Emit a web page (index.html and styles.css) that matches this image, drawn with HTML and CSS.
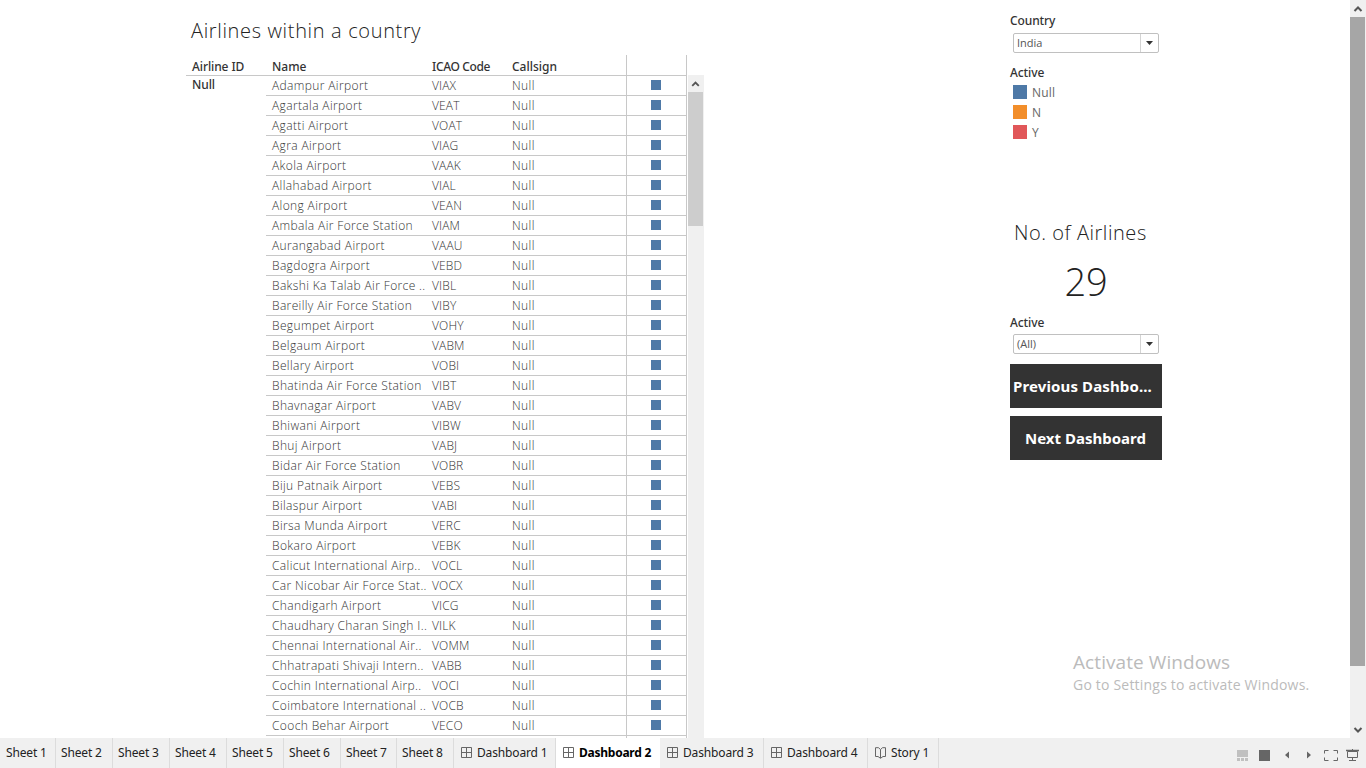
FILE: index.html
```html
<!DOCTYPE html>
<html lang="en">
<head>
<meta charset="utf-8">
<title>Airlines within a country</title>
<link rel="stylesheet" href="styles.css">
</head>
<body>
<div class="app">
  <div class="viewport">
    <main class="dashboard">
      <section class="sheet">
        <h1 class="title">Airlines within a country</h1>
        <div class="table-area">
          <div class="table">
            <div class="head">
              <div class="h-id">Airline ID</div><div class="h-name">Name</div><div class="h-icao">ICAO Code</div><div class="h-call">Callsign</div><div class="h-mark"></div>
            </div>
            <div class="table-body">
              <div class="group">Null</div>
              <div class="rows" id="rows"></div>
            </div>
          </div>
          <div class="scroll inner">
            <svg class="chev" viewBox="0 0 16 17"><path d="M4.500 11 8 7.500l3.500 3.500"/></svg>
            <div class="thumb"></div>
          </div>
        </div>
      </section>
      <aside class="side">
        <div class="label country">Country</div>
        <div class="select"><span>India</span><i><svg viewBox="0 0 7 4"><path d="M0 0h7L3.5 4z"/></svg></i></div>
        <div class="label active-legend">Active</div>
        <ul class="legend">
          <li><b class="null"></b><span>Null</span></li>
          <li><b class="no"></b><span>N</span></li>
          <li><b class="yes"></b><span>Y</span></li>
        </ul>
        <h2 class="count-title">No. of Airlines</h2>
        <div class="count">29</div>
        <div class="label active-filter">Active</div>
        <div class="select all"><span>(All)</span><i><svg viewBox="0 0 7 4"><path d="M0 0h7L3.5 4z"/></svg></i></div>
        <div class="nav prev"><span>Previous Dashbo...</span></div>
        <div class="nav next"><span>Next Dashboard</span></div>
      </aside>
      <div class="watermark"><div class="w1">Activate Windows</div><div class="w2">Go to Settings to activate Windows.</div></div>
    </main>
    <div class="scroll outer">
      <svg class="chev" viewBox="0 0 16 17"><path d="M4.500 11 8 7.500l3.500 3.500"/></svg>
      <div class="thumb"></div>
      <svg class="chev down" viewBox="0 0 16 17"><path d="M4.500 7 8 10.500 11.500 7"/></svg>
    </div>
  </div>
  <footer class="tabs">
    <div class="tab s1">Sheet 1</div><div class="tab">Sheet 2</div><div class="tab">Sheet 3</div><div class="tab">Sheet 4</div><div class="tab">Sheet 5</div><div class="tab">Sheet 6</div><div class="tab s7">Sheet 7</div><div class="tab">Sheet 8</div>
    <div class="tab dash d1"><svg class="grid" viewBox="0 0 11 11"><path d="M.5 .5h10v10H.5zM5.500 .5v10M.5 5.500h10"/></svg><span>Dashboard 1</span></div>
    <div class="tab dash current"><svg class="grid" viewBox="0 0 11 11"><path d="M.5 .5h10v10H.5zM5.500 .5v10M.5 5.500h10"/></svg><span>Dashboard 2</span></div>
    <div class="tab dash"><svg class="grid" viewBox="0 0 11 11"><path d="M.5 .5h10v10H.5zM5.500 .5v10M.5 5.500h10"/></svg><span>Dashboard 3</span></div>
    <div class="tab dash"><svg class="grid" viewBox="0 0 11 11"><path d="M.5 .5h10v10H.5zM5.500 .5v10M.5 5.500h10"/></svg><span>Dashboard 4</span></div>
    <div class="tab story"><svg class="book" viewBox="0 0 11 12"><path d="M.5 .7 3.500 .7 5.500 2.500 7.500 .7 10.500 .7V9.500H8L5.500 11.300 3 9.500H.5zM5.500 2.500v8.500"/></svg><span>Story 1</span></div>
    <svg class="tools" viewBox="0 0 130 30">
      <g fill="#c0c0c0"><path d="M1 12h11v7H1zM1 20h3v3H1zM5 20h3v3H5zM9 20h3v3H9z"/></g>
      <path fill="#666" d="M23 12h11v11H23zM53 13.500v7L49 17zM71 13.500v7L75 17z"/>
      <g fill="none" stroke="#666"><path d="M92.500 12.500h-4v3M97.500 12.500h4v3M88.500 19.500v3h4M101.500 19.500v3h-4"/><path d="M111.500 13.500h10v6h-10zM116.500 11v2M116.500 19.500v3M113 22.500h7"/><path d="M110 12.500h13" stroke-width="1.500"/></g>
    </svg>
  </footer>
</div>
<script src="table.js"></script>
</body>
</html>
```
FILE: styles.css
```css
* { box-sizing: border-box; }
body { margin: 0; overflow: hidden; background: #fff; font-family: "Noto Sans", "Open Sans", sans-serif; font-size: 12px; color: #333; }
.app { display: flex; flex-direction: column; width: 1366px; height: 768px; }
.viewport { display: flex; height: 738px; }
.dashboard { position: relative; display: flex; width: 1350px; overflow: hidden; }
.sheet { width: 518px; margin-left: 186px; }
.title, .count-title { margin: 0; font-family: "Open Sans", sans-serif; font-weight: 300; font-size: 20px; white-space: nowrap; color: #222; }
.title { height: 55px; padding: 17px 0 0 5px; line-height: 28px; letter-spacing: .65px; }
.table-area { display: flex; height: 683px; }
.table { width: 502px; overflow: hidden; }
.head { display: flex; width: 501px; height: 21px; border-bottom: 1px solid #c8c8c8; font-weight: 500; line-height: 23px; }
.head > div { padding-left: 6px; white-space: nowrap; }
.h-id, .h-icao { width: 80px; }
.h-id { letter-spacing: -.1px; }
.h-icao { letter-spacing: -.35px; }
.h-name { width: 160px; }
.h-call { width: 120px; }
.h-mark { width: 61px; border: solid #c8c8c8; border-width: 0 1px; }
.table-body { display: flex; }
.group { width: 80px; padding-left: 6px; font-weight: 500; line-height: 17px; letter-spacing: -.1px; }
.row { display: flex; width: 421px; height: 20px; border-bottom: 1px solid #c8c8c8; font-family: "Open Sans", sans-serif; font-weight: 300; line-height: 20px; white-space: nowrap; color: #333; }
.row > div { padding-left: 6px; }
.c-name { width: 160px; letter-spacing: .37px; }
.c-icao { width: 80px; letter-spacing: .15px; }
.c-call { width: 120px; letter-spacing: .4px; }
.c-mark { width: 61px; border: solid #c8c8c8; border-width: 0 1px; }
.row .c-mark { padding: 4px 0 0 24px; }
.c-mark i { display: block; width: 10px; height: 10px; background: #4e79a7; }
.scroll { display: flex; flex-direction: column; width: 16px; background: #f0f0f0; }
.inner { height: 663px; margin-top: 20px; }
.chev { display: block; width: 16px; height: 17px; flex: none; fill: none; stroke: #555; stroke-width: 2; }
.inner .chev { width: 15px; }
.inner .thumb { width: 15px; height: 134px; background: #cdcdcd; }
.outer .thumb { width: 15px; height: 649px; background: #a6a6a6; }
.down { margin-top: auto; }
.side { width: 152px; margin-left: 306px; }
.label { font-weight: 500; line-height: 16px; height: 16px; letter-spacing: -.1px; }
.country { margin-top: 13px; }
.select { display: flex; width: 146px; height: 20px; margin: 4px 0 0 3px; border: 1px solid #c0c0c0; border-radius: 2px; font-family: "Open Sans", sans-serif; font-size: 11px; font-weight: 400; line-height: 17px; color: #555; }
.select span { width: 126px; padding-left: 3px; }
.select i { display: flex; align-items: center; justify-content: center; flex: 1; border-left: 1px solid #d4d4d4; }
.select svg { width: 7px; height: 4px; fill: #333; }
.active-legend { margin-top: 12px; }
.legend { margin: 3px 0 0 3px; padding: 0; list-style: none; }
.legend li { display: flex; align-items: center; gap: 5px; height: 20px; color: #666; letter-spacing: .2px; font-family: "Open Sans", sans-serif; line-height: 18px; }
.legend b { width: 14px; height: 14px; margin-bottom: 4px; }
.legend span { margin-bottom: 2px; }
.null { background: #4e79a7; }
.no { background: #f28e2b; }
.yes { background: #e15759; }
.count-title { margin: 75px 0 0 4px; line-height: 28px; letter-spacing: .55px; }
.count { height: 50px; margin-top: 9px; text-align: center; font-family: "Open Sans", sans-serif; font-size: 38px; font-weight: 300; line-height: 50px; letter-spacing: -.3px; color: #222; }
.active-filter { margin-top: 9px; }
.all { margin-top: 3px; }
.nav { display: flex; align-items: center; height: 44px; background: #333; color: #fff; font-size: 15px; font-weight: 700; white-space: nowrap; }
.prev { margin-top: 10px; padding-left: 3px; letter-spacing: .12px; }
.next { margin-top: 8px; padding-left: 15px; }
.watermark { position: absolute; left: 1073px; top: 649px; font-family: "Open Sans", sans-serif; color: #bbb; white-space: nowrap; }
.w1 { font-size: 19px; line-height: 26px; letter-spacing: .08px; }
.w2 { font-size: 14px; line-height: 20px; letter-spacing: .2px; }
.tabs { display: flex; height: 30px; background: #f0f0f0; color: #222; letter-spacing: -.15px; }
.tab { display: flex; width: 57px; flex: none; padding-left: 5px; border-right: 1px solid #dcdcdc; line-height: 29px; white-space: nowrap; }
.s1 { width: 56px; padding-left: 6px; }
.s7 { width: 56px; }
.dash { width: 104px; padding-left: 7px; gap: 5px; }
.d1 { width: 102px; }
.current { background: #fff; color: #000; font-weight: 700; letter-spacing: -.25px; border-right-color: #fff; }
.grid, .book { width: 11px; height: 11px; margin-top: 9px; fill: none; stroke: #666; }
.book { height: 12px; }
.story { width: 71px; padding-left: 7px; gap: 5px; }
.tools { width: 130px; height: 30px; margin-left: auto; }
```
FILE: table.js
```js
const airports = [
  ["Adampur Airport", "VIAX"], ["Agartala Airport", "VEAT"], ["Agatti Airport", "VOAT"],
  ["Agra Airport", "VIAG"], ["Akola Airport", "VAAK"], ["Allahabad Airport", "VIAL"],
  ["Along Airport", "VEAN"], ["Ambala Air Force Station", "VIAM"], ["Aurangabad Airport", "VAAU"],
  ["Bagdogra Airport", "VEBD"], ["Bakshi Ka Talab Air Force ..", "VIBL"], ["Bareilly Air Force Station", "VIBY"],
  ["Begumpet Airport", "VOHY"], ["Belgaum Airport", "VABM"], ["Bellary Airport", "VOBI"],
  ["Bhatinda Air Force Station", "VIBT"], ["Bhavnagar Airport", "VABV"], ["Bhiwani Airport", "VIBW"],
  ["Bhuj Airport", "VABJ"], ["Bidar Air Force Station", "VOBR"], ["Biju Patnaik Airport", "VEBS"],
  ["Bilaspur Airport", "VABI"], ["Birsa Munda Airport", "VERC"], ["Bokaro Airport", "VEBK"],
  ["Calicut International Airp..", "VOCL"], ["Car Nicobar Air Force Stat..", "VOCX"], ["Chandigarh Airport", "VICG"],
  ["Chaudhary Charan Singh I..", "VILK"], ["Chennai International Air..", "VOMM"], ["Chhatrapati Shivaji Intern..", "VABB"],
  ["Cochin International Airp..", "VOCI"], ["Coimbatore International ..", "VOCB"], ["Cooch Behar Airport", "VECO"],
  ["", ""]
];
document.getElementById("rows").innerHTML = airports.map(([name, code]) =>
  `<div class="row"><div class="c-name">${name}</div><div class="c-icao">${code}</div><div class="c-call">${name ? "Null" : ""}</div><div class="c-mark">${name ? "<i></i>" : ""}</div></div>`
).join("");
```
